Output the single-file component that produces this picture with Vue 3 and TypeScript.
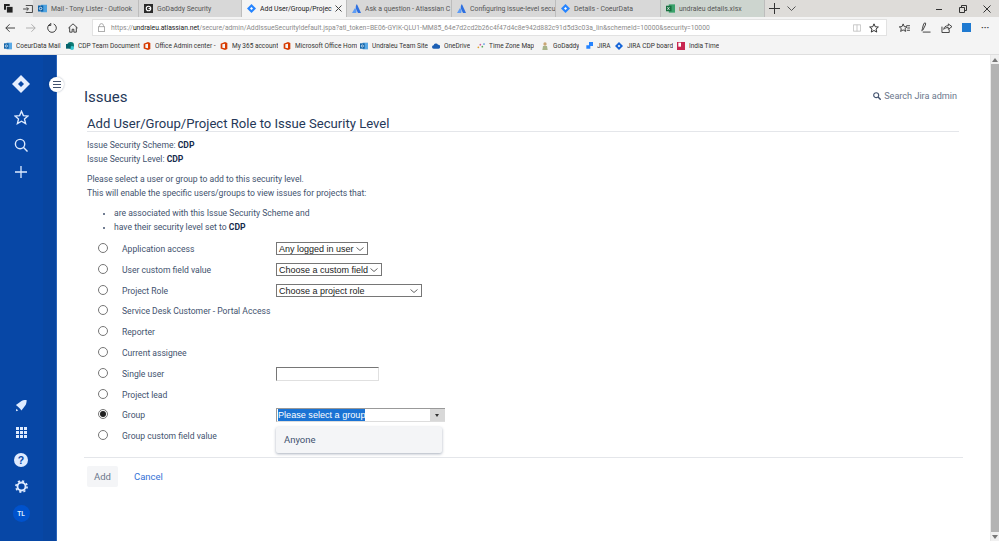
<template>
  <div class="window">
    <div class="tabstrip">
      <div class="tab-actions">
        <svg width="9" height="9" viewBox="0 0 11 11"><rect x="0" y="0" width="7" height="7" fill="#222" /><rect x="3" y="3" width="8" height="8" fill="#222" stroke="#e3e3e3" /></svg>
        <svg width="10" height="8" viewBox="0 0 11 9" class="back-tab"><path d="M3 .5h7.500v8H3M0 4.500h6M4 2.500l2 2-2 2" fill="none" stroke="#333" /></svg>
      </div>
      <div
        v-for="tab in tabs"
        :key="tab.title"
        class="tab"
        :class="{ active: tab.active, sheet: tab.icon === 'excel' }"
        :style="{ width: tab.width + 'px' }"
      >
        <span class="tab-icon">
          <svg v-if="tab.icon === 'outlook'" width="9" height="9" viewBox="0 0 12 12"><rect x="4" y="1" width="8" height="10" fill="#4fa3e0" /><rect y="2" width="7" height="8" fill="#0f62a8" /><circle cx="3.500" cy="6" r="1.700" fill="none" stroke="#fff" /></svg>
          <svg v-else-if="tab.icon === 'godaddy'" width="9" height="9" viewBox="0 0 12 12"><rect width="12" height="12" fill="#2a2a2a" /><circle cx="6" cy="6" r="3" fill="none" stroke="#fff" stroke-width="1.500" /><path d="M6 6h3" stroke="#fff" stroke-width="1.500" /></svg>
          <svg v-else-if="tab.icon === 'jira'" width="9" height="9" viewBox="0 0 12 12"><path d="M6 0l6 6-6 6-6-6z" fill="#2684ff" /><path d="M6 4l2 2-2 2-2-2z" fill="#fff" /></svg>
          <svg v-else-if="tab.icon === 'atlassian'" width="9" height="9" viewBox="0 0 12 12"><path d="M6.500 0c-2 3-2 5-.5 8l2 4h4z" fill="#2d6fe0" /><path d="M3.500 6L0 12h5.500c1-2 .5-4-.8-6-.3-.4-.9-.4-1.200 0z" fill="#5d9cf5" /></svg>
          <svg v-else width="9" height="9" viewBox="0 0 13 12"><rect x="4" y="0" width="9" height="12" fill="#3aa26b" /><rect y="2" width="8" height="8" fill="#17703f" /><path d="M2 4l3 4M5 4L2 8" stroke="#fff" /></svg>
        </span>
        <span class="tab-title">{{ tab.title }}</span>
        <svg v-if="tab.active" class="tab-close" width="7" height="7" viewBox="0 0 7 7"><path d="M.5.500l6 6M6.500.500l-6 6" stroke="#444" /></svg>
      </div>
      <div class="strip-plus">
        <svg width="11" height="11" viewBox="0 0 11 11"><path d="M5.500 0v11M0 5.500h11" stroke="#333" /></svg>
        <svg width="9" height="5" viewBox="0 0 9 5"><path d="M.5.500l4 4 4-4" fill="none" stroke="#555" /></svg>
      </div>
      <div class="win-controls">
        <svg width="8" height="8" viewBox="0 0 8 8"><path d="M1 4.500h6" stroke="#333" /></svg>
        <svg width="8" height="8" viewBox="0 0 8 8"><path d="M2.500 2V.500h5v5H6M.5 2.500h5v5h-5z" fill="none" stroke="#333" /></svg>
        <svg width="8" height="8" viewBox="0 0 8 8"><path d="M.5.500l7 7M7.500.500l-7 7" stroke="#333" /></svg>
      </div>
    </div>

    <div class="navbar">
      <div class="nav-buttons">
        <svg width="10" height="10" viewBox="0 0 12 12"><path d="M12 6H1M5.500 1.500L1 6l4.500 4.500" fill="none" stroke="#333" stroke-width="1.100" /></svg>
        <svg width="10" height="10" viewBox="0 0 12 12"><path d="M0 6h11M6.500 1.500L11 6l-4.500 4.500" fill="none" stroke="#aaa" stroke-width="1.100" /></svg>
        <svg width="10" height="10" viewBox="0 0 12 12"><path d="M4 1.200A5.200 5.200 0 1 0 8 1.200M4.500 0v3H1.500" fill="none" stroke="#333" stroke-width="1.100" /></svg>
        <svg width="10" height="10" viewBox="0 0 12 12"><path d="M.5 6L6 1l5.500 5M2 5v6h3V7.500h2V11h3V5" fill="none" stroke="#333" stroke-width="1.100" /></svg>
      </div>
      <div class="address">
        <svg width="7" height="9" viewBox="0 0 9 11"><rect x=".5" y="4.500" width="8" height="6" fill="none" stroke="#999" /><path d="M2 4.500V3a2.500 2.500 0 0 1 5 0v1.500" fill="none" stroke="#999" /></svg>
        <span class="url"><span class="url-dim">https://</span>undraleu.atlassian.net<span class="url-dim">/secure/admin/AddIssueSecurity!default.jspa?atl_token=BE06-GYIK-QLU1-MM85_64e7d2cd2b26c4f47d4c8e942d882c91d5d3c03a_lin&amp;schemeId=10000&amp;security=10000</span></span>
        <svg class="reader" width="8" height="8" viewBox="0 0 10 10"><path d="M.5 1h9v8h-9zM5 1v8" fill="none" stroke="#bbb" /></svg>
        <svg width="10" height="10" viewBox="0 0 24 24"><path d="M12 2l3 7 7.500.6-5.700 4.900 1.800 7.300L12 18l-6.600 3.800 1.800-7.300L1.500 9.600 9 9z" fill="none" stroke="#333" stroke-width="2.400" /></svg>
      </div>
      <div class="nav-tools">
        <svg width="11" height="10" viewBox="0 0 24 22"><path d="M9 2l2.500 6 6 .5-4.500 4 1.500 6-5.500-3.300-5.500 3.300 1.500-6-4.500-4 6-.5zM16 6h8M18 11h6M17 16h7" fill="none" stroke="#333" stroke-width="2" /></svg>
        <svg width="11" height="11" viewBox="0 0 12 12"><path d="M2 10C3 6 3.500 2 5 1c1.200-.5 1.500 1 .8 2.500L3 9M3 11h8.500" fill="none" stroke="#333" /></svg>
        <svg width="11" height="10" viewBox="0 0 12 11"><path d="M1 4v6.500h8V7M3 7c0-2.500 2-4 5-4V1l4 3-4 3V5C6 5 4 5.500 3 7z" fill="none" stroke="#333" /></svg>
        <span class="ext-badge"></span>
        <span class="more-dots">···</span>
      </div>
    </div>

    <div class="bookmarks">
      <div v-for="mark in bookmarks" :key="mark.label" class="bookmark" :style="{ width: mark.width + 'px' }">
        <svg width="8" height="8" viewBox="0 0 12 12" class="mark-icon">
          <template v-if="mark.icon === 'office'">
            <path d="M7.500 0L11 1.500v9L7.500 12 1 9.800V2.500zM7.500 2.500L3.500 3.500v5l4 1z" fill="#d83b01" fill-rule="evenodd" />
          </template>
          <template v-else-if="mark.icon === 'outlook'">
            <rect x="4" y="1" width="8" height="10" fill="#5aa9e6" /><rect y="2" width="7" height="8" fill="#0f62a8" /><circle cx="3.500" cy="6" r="1.700" fill="none" stroke="#fff" />
          </template>
          <template v-else-if="mark.icon === 'sharepoint'">
            <circle cx="7" cy="5" r="5" :fill="mark.color" /><circle cx="9" cy="9" r="3" fill="#37c6d0" /><rect y="3" width="7" height="7" fill="#05636b" />
          </template>
          <template v-else-if="mark.icon === 'cloud'">
            <path d="M2.500 10a2.500 2.500 0 0 1 0-5 3.500 3.500 0 0 1 6.500-1 3 3 0 0 1 .5 6z" :fill="mark.color" />
          </template>
          <template v-else-if="mark.icon === 'dots'">
            <circle cx="2" cy="8" r="1.300" fill="#e0a030" /><circle cx="5" cy="4" r="1.300" fill="#d05a9a" /><circle cx="8" cy="7" r="1.300" fill="#57a55a" /><circle cx="10.500" cy="3" r="1.300" fill="#4a8fe0" />
          </template>
          <template v-else-if="mark.icon === 'person'">
            <circle cx="6" cy="3" r="2.500" fill="#c9a574" /><path d="M3 6h6l1 6H2z" fill="#a8b48a" />
          </template>
          <template v-else-if="mark.icon === 'jira'">
            <path d="M6 0l6 6-6 6-6-6z" :fill="mark.color" /><path d="M6 4l2 2-2 2-2-2z" fill="#fff" />
          </template>
          <template v-else-if="mark.icon === 'arrows'">
            <path d="M12 0v6H8v4H2V5h4V0z" :fill="mark.color" />
          </template>
          <template v-else>
            <rect width="12" height="12" :fill="mark.color" /><rect x="2" y="1" width="4" height="6" fill="#fff" />
          </template>
        </svg>
        <span class="mark-label">{{ mark.label }}</span>
      </div>
    </div>

    <div class="app">
      <aside class="sidebar">
        <div class="side-top">
          <span class="side-item logo-item"><svg width="18" height="18" viewBox="0 0 18 18"><path d="M9 0l9 9-9 9-9-9z" fill="#e6efff" /><path d="M9 6l3 3-3 3-3-3z" fill="#0747a6" /></svg></span>
          <span class="side-item"><svg width="15" height="15" viewBox="0 0 24 24"><path d="M12 2l3 7 7.500.6-5.700 4.900 1.800 7.300L12 18l-6.600 3.800 1.800-7.300L1.500 9.600 9 9z" fill="none" stroke="#deebff" stroke-width="2.200" /></svg></span>
          <span class="side-item"><svg width="14" height="14" viewBox="0 0 15 15"><circle cx="6.500" cy="6.500" r="5" fill="none" stroke="#deebff" stroke-width="1.500" /><path d="M10 10l4.500 4.500" stroke="#deebff" stroke-width="1.500" /></svg></span>
          <span class="side-item"><svg width="12" height="12" viewBox="0 0 13 13"><path d="M6.500 0v13M0 6.500h13" stroke="#deebff" stroke-width="1.400" /></svg></span>
        </div>
        <div class="side-bottom">
          <span class="side-item"><svg width="12" height="12" viewBox="0 0 13 13"><path d="M1 5.500L7 1c2-1 4.500-1.200 5.500-1 .2 1 0 3.500-1 5.500L7 11.500 5.500 9.500 3.500 7.500z" fill="#deebff" /><path d="M1.500 9.500l2 2-2.500.7z" fill="#deebff" /></svg></span>
          <span class="side-item"><span class="app-grid"><i v-for="n in 9" :key="n"></i></span></span>
          <span class="side-item"><svg width="14" height="14" viewBox="0 0 14 14"><circle cx="7" cy="7" r="7" fill="#deebff" /><text x="7" y="11" text-anchor="middle" font-size="10.500" font-weight="700" fill="#0747a6" font-family="Liberation Sans">?</text></svg></span>
          <span class="side-item"><svg width="13" height="13" viewBox="0 0 14 14"><circle cx="7" cy="7" r="4.300" fill="none" stroke="#deebff" stroke-width="2" /><circle cx="7" cy="7" r="6" fill="none" stroke="#deebff" stroke-width="1.800" stroke-dasharray="2.300 2.400" /></svg></span>
          <span class="side-item"><span class="avatar">TL</span></span>
        </div>
      </aside>
      <span class="collapse">
        <svg width="8" height="7" viewBox="0 0 8 7"><path d="M0 .5h8M0 3.500h8M0 6.500h8" stroke="#42526e" /></svg>
      </span>

      <main class="content">
        <header class="page-head">
          <h1>Issues</h1>
          <span class="admin-search">
            <svg width="8" height="8" viewBox="0 0 9 9"><circle cx="3.600" cy="3.600" r="2.800" fill="none" stroke="#42526e" stroke-width="1.300" /><path d="M5.700 5.700L8.700 8.700" stroke="#42526e" stroke-width="1.600" /></svg>
            Search Jira admin
          </span>
        </header>
        <h2>Add User/Group/Project Role to Issue Security Level</h2>
        <p class="meta">Issue Security Scheme: <b>CDP</b><br />Issue Security Level: <b>CDP</b></p>
        <p class="intro">Please select a user or group to add to this security level.<br />This will enable the specific users/groups to view issues for projects that:</p>
        <ul>
          <li>are associated with this Issue Security Scheme and</li>
          <li>have their security level set to <b>CDP</b></li>
        </ul>

        <div class="options">
          <div v-for="opt in options" :key="opt.label" class="option">
            <span class="radio" :class="{ checked: opt.checked }"></span>
            <span class="opt-label">{{ opt.label }}</span>
            <span v-if="opt.select" class="fake-select" :style="{ width: opt.width + 'px' }">
              {{ opt.select }}
              <svg width="8" height="4" viewBox="0 0 8 4"><path d="M.5.500L4 3.500 7.500.500" fill="none" stroke="#666" /></svg>
            </span>
            <span v-if="opt.input" class="fake-input"></span>
            <div v-if="opt.checked" class="group-picker">
              <div class="group-field">
                <span class="group-text"><span class="selected">Please select a group</span></span>
                <span class="group-arrow"></span>
              </div>
              <div class="group-menu">Anyone</div>
            </div>
          </div>
        </div>

        <div class="buttons">
          <button class="btn-add">Add</button>
          <a class="btn-cancel">Cancel</a>
        </div>
      </main>
      <div class="scrollbar">
        <span class="scroll-btn"><svg width="6" height="4" viewBox="0 0 6 4"><path d="M3 0l3 4H0z" fill="#777" /></svg></span>
        <span class="scroll-track"></span>
        <span class="scroll-btn"><svg width="6" height="4" viewBox="0 0 6 4"><path d="M3 4L0 0h6z" fill="#777" /></svg></span>
      </div>
    </div>
  </div>
</template>

<script setup lang="ts">
const tabs = [
  { title: 'Mail - Tony Lister - Outlook', icon: 'outlook', width: 106 },
  { title: 'GoDaddy Security', icon: 'godaddy', width: 103 },
  { title: 'Add User/Group/Projec', icon: 'jira', width: 105, active: true },
  { title: 'Ask a question - Atlassian C', icon: 'atlassian', width: 105 },
  { title: 'Configuring issue-level secu', icon: 'atlassian', width: 104 },
  { title: 'Details - CoeurData', icon: 'jira', width: 105 },
  { title: 'undraleu details.xlsx', icon: 'excel', width: 104 }
]

const bookmarks = [
  { label: 'CoeurData Mail', icon: 'outlook', color: '#2a7bd0', width: 62 },
  { label: 'CDP Team Document', icon: 'sharepoint', color: '#0b7a75', width: 77 },
  { label: 'Office Admin center -', icon: 'office', color: '#d83b01', width: 77 },
  { label: 'My 365 account', icon: 'office', color: '#d83b01', width: 63 },
  { label: 'Microsoft Office Hom', icon: 'office', color: '#d83b01', width: 77 },
  { label: 'Undraleu Team Site', icon: 'outlook', color: '#1e7fc9', width: 72 },
  { label: 'OneDrive', icon: 'cloud', color: '#1b5fb4', width: 45 },
  { label: 'Time Zone Map', icon: 'dots', color: '#d6b85a', width: 64 },
  { label: 'GoDaddy', icon: 'person', color: '#b9a27c', width: 44 },
  { label: 'JIRA', icon: 'arrows', color: '#2684ff', width: 30 },
  { label: 'JIRA CDP board', icon: 'jira', color: '#1565d8', width: 62 },
  { label: 'India Time', icon: 'calendar', color: '#c8254f', width: 50 }
]

const options: { label: string; select?: string; width?: number; input?: boolean; checked?: boolean }[] = [
  { label: 'Application access', select: 'Any logged in user', width: 92 },
  { label: 'User custom field value', select: 'Choose a custom field', width: 106 },
  { label: 'Project Role', select: 'Choose a project role', width: 146 },
  { label: 'Service Desk Customer - Portal Access' },
  { label: 'Reporter' },
  { label: 'Current assignee' },
  { label: 'Single user', input: true },
  { label: 'Project lead' },
  { label: 'Group', checked: true },
  { label: 'Group custom field value' }
]
</script>

<style>
html,
body {
  margin: 0;
  overflow: hidden;
}
</style>

<style scoped>
.window {
  width: 999px;
  height: 541px;
  display: flex;
  flex-direction: column;
  overflow: hidden;
  font-family: Roboto, "Liberation Sans", sans-serif;
  background: #fff;
}

.tabstrip {
  height: 17px;
  background: #dedcd9;
  display: flex;
  align-items: stretch;
  flex: none;
}

.tab-actions {
  width: 33px;
  display: flex;
  align-items: center;
  gap: 10px;
  padding-left: 4px;
  box-sizing: border-box;
  background: #e6e6e6;
}

.tab {
  display: flex;
  align-items: center;
  gap: 4px;
  padding-left: 5px;
  box-sizing: border-box;
  border-right: 1px solid #bdbdbd;
  background: #d8d8d8;
  font-size: 6.900px;
  color: #555;
  overflow: hidden;
  white-space: nowrap;
}

.tab.active {
  background: #f4f4f4;
  color: #222;
}

.tab.sheet {
  background: #cdd5cf;
}

.tab-icon {
  display: flex;
  flex: none;
}

.tab-title {
  flex: 1;
  overflow: hidden;
}

.tab-close {
  flex: none;
  margin-right: 4px;
  margin-left: -3px;
}

.strip-plus {
  display: flex;
  align-items: center;
  gap: 7px;
  padding-left: 4px;
}

.win-controls {
  margin-left: auto;
  display: flex;
  align-items: center;
  gap: 16px;
  padding-right: 8px;
}

.navbar {
  height: 21px;
  background: #f4f4f4;
  display: flex;
  align-items: center;
  flex: none;
}

.nav-buttons {
  width: 92px;
  display: flex;
  gap: 11px;
  padding-left: 5px;
  box-sizing: border-box;
}

.address {
  width: 795px;
  height: 17px;
  background: #fff;
  border: 1px solid #e2e2e2;
  box-sizing: border-box;
  display: flex;
  align-items: center;
  padding: 0 7px 0 5px;
  gap: 6px;
  white-space: nowrap;
}

.url {
  font-size: 6.750px;
  color: #222;
  flex: 1;
}

.url-dim {
  color: #8a8a8a;
}

.reader {
  margin-right: 2px;
}

.nav-tools {
  flex: 1;
  display: flex;
  align-items: center;
  gap: 10px;
  padding-left: 12px;
}

.ext-badge {
  width: 9px;
  height: 9px;
  background: #1f7ad1;
}

.more-dots {
  font-size: 9px;
  font-weight: 700;
  color: #444;
}

.bookmarks {
  height: 17px;
  background: #f4f4f4;
  display: flex;
  align-items: center;
  flex: none;
  padding-left: 4px;
  box-sizing: border-box;
  border-bottom: 1px solid #dedede;
}

.bookmark {
  display: flex;
  align-items: center;
  gap: 4px;
  font-size: 6.500px;
  color: #333;
  white-space: nowrap;
  overflow: hidden;
  flex: none;
}

.mark-icon {
  flex: none;
}

.mark-label {
  overflow: hidden;
}

.app {
  flex: 1;
  display: flex;
  position: relative;
  min-height: 0;
}

.sidebar {
  width: 57px;
  flex: none;
  background: linear-gradient(to right, #0747a6 43px, #0845a0 43px);
  display: flex;
  flex-direction: column;
  justify-content: space-between;
  padding: 15px 14px 14px 0;
  box-sizing: border-box;
  border-right: 1px solid #2a64b8;
}

.side-top,
.side-bottom {
  display: flex;
  flex-direction: column;
}

.side-item {
  height: 27px;
  display: flex;
  align-items: center;
  justify-content: center;
}

.logo-item {
  margin-bottom: 7px;
}

.app-grid {
  display: grid;
  grid-template-columns: repeat(3, 3px);
  gap: 1px;
}

.app-grid i {
  width: 3px;
  height: 3px;
  background: #deebff;
}

.avatar {
  width: 17px;
  height: 17px;
  border-radius: 50%;
  background: #0052cc;
  color: #deebff;
  font-size: 6.500px;
  font-weight: 700;
  display: flex;
  align-items: center;
  justify-content: center;
}

.collapse {
  position: absolute;
  left: 49px;
  top: 22px;
  width: 15px;
  height: 15px;
  border-radius: 50%;
  background: #fff;
  box-shadow: 0 0 2px rgba(9, 30, 66, 0.35);
  display: flex;
  align-items: center;
  justify-content: center;
}

.content {
  flex: 1;
  padding: 30px 27px 0 27px;
  color: #42526e;
  font-size: 8.600px;
  min-width: 0;
}

.page-head {
  display: flex;
  align-items: center;
  justify-content: space-between;
  padding-right: 6px;
}

h1 {
  margin: 1px 0 -1px 0;
  font-size: 15px;
  font-weight: 400;
  color: #253858;
  line-height: 22px;
}

.admin-search {
  display: flex;
  align-items: center;
  gap: 3px;
  font-size: 9.100px;
  color: #6b778c;
}

h2 {
  margin: 10px 4px 0 3px;
  font-size: 13.100px;
  font-weight: 400;
  color: #253858;
  line-height: 14px;
  border-bottom: 1px solid #e4e6ea;
  height: 14px;
}

b {
  color: #172b4d;
}

.meta {
  margin: 6px 0 0 3px;
  line-height: 14px;
}

.intro {
  margin: 6px 0 0 3px;
  line-height: 14px;
}

ul {
  margin: 6px 0 0 0;
  padding-left: 30px;
  line-height: 14px;
}

li::marker {
  font-size: 8px;
}

.options {
  margin-top: 4.600px;
  display: flex;
  flex-direction: column;
}

.option {
  height: 20.800px;
  display: flex;
  align-items: center;
  position: relative;
  padding-left: 14px;
}

.radio {
  width: 8px;
  height: 8px;
  border: 1px solid #767676;
  border-radius: 50%;
  background: #fff;
  flex: none;
  position: relative;
  top: -1px;
}

.radio.checked::after {
  content: "";
  position: absolute;
  inset: 1px;
  border-radius: 50%;
  background: #222;
}

.opt-label {
  width: 154px;
  margin-left: 14px;
  white-space: nowrap;
  flex: none;
}

.fake-select {
  height: 13px;
  border: 1px solid #767676;
  box-sizing: border-box;
  background: #fff;
  display: flex;
  align-items: center;
  justify-content: space-between;
  padding: 0 3px 0 2px;
  font-family: "Liberation Sans", sans-serif;
  font-size: 9px;
  color: #222;
  white-space: nowrap;
}

.fake-input {
  width: 103px;
  height: 14px;
  box-sizing: border-box;
  background: #fff;
  border: 1px solid #e0e0e0;
  border-top-color: #767676;
  border-left-color: #767676;
}

.group-picker {
  position: relative;
}

.group-field {
  width: 169px;
  height: 14px;
  box-sizing: border-box;
  display: flex;
  border: 1px solid #999;
  border-right: none;
  border-bottom-color: #ddd;
  background: #fff;
}

.group-text {
  flex: 1;
  font-family: "Liberation Sans", sans-serif;
  font-size: 9.100px;
  line-height: 12px;
  padding-left: 1px;
  overflow: hidden;
}

.selected {
  background: #1a73d4;
  color: #fff;
  display: inline-block;
}

.group-arrow {
  width: 15px;
  background: #d8d8d8;
  position: relative;
}

.group-arrow::after {
  content: "";
  position: absolute;
  left: 5px;
  top: 5px;
  border: 2.500px solid transparent;
  border-top: 3px solid #333;
}

.group-menu {
  position: absolute;
  left: 0;
  top: 19px;
  width: 166px;
  height: 26px;
  background: #f4f5f7;
  border-radius: 2px;
  box-shadow: 0 1px 3px rgba(9, 30, 66, 0.35);
  font-size: 9.500px;
  line-height: 26px;
  padding-left: 8px;
  box-sizing: border-box;
  color: #42526e;
  z-index: 2;
}

.buttons {
  margin-top: 10px;
  padding: 8px 0 0 3px;
  border-top: 1px solid #e4e6ea;
  display: flex;
  align-items: center;
  gap: 16px;
}

.btn-add {
  width: 31px;
  height: 21px;
  padding: 0;
  border: 0;
  border-radius: 2px;
  background: #f4f5f7;
  color: #6b778c;
  font-family: inherit;
  font-size: 9.500px;
}

.btn-cancel {
  color: #3572d6;
  font-size: 9.500px;
}

.scrollbar {
  width: 8px;
  flex: none;
  display: flex;
  flex-direction: column;
  border-left: 1px solid #e8e8e8;
}

.scroll-btn {
  height: 9px;
  background: #f0f0f0;
  display: flex;
  align-items: center;
  justify-content: center;
}

.scroll-track {
  flex: 1;
  background: #b3b3b3;
}
</style>
